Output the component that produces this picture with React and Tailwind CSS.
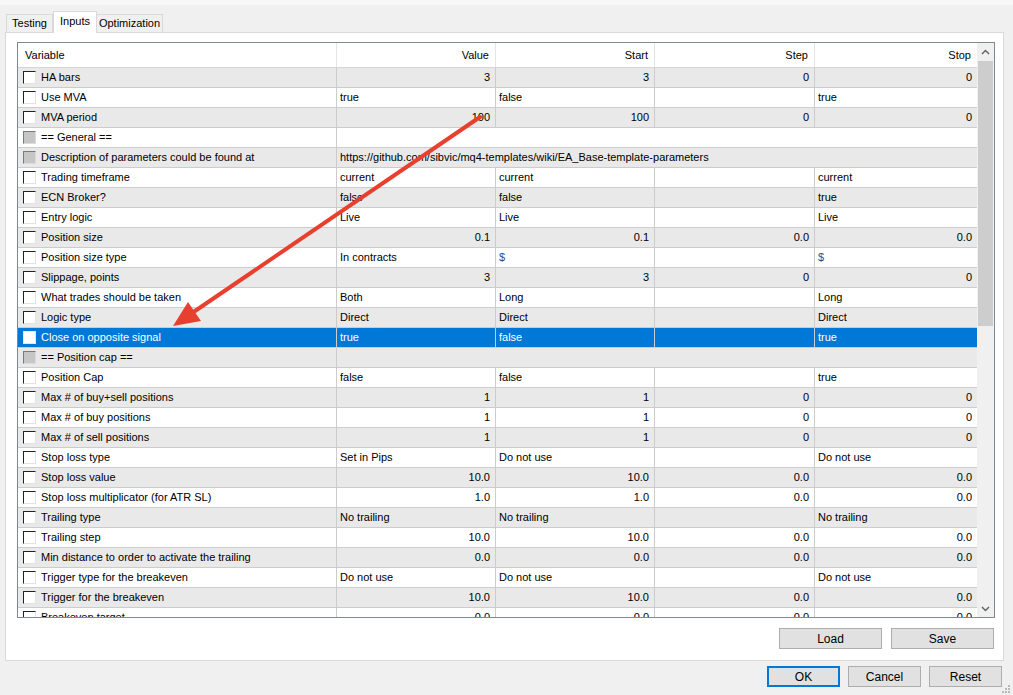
import React from 'react';
import clsx from 'clsx';

// Parameters of the tester "Inputs" tab. kind: num = right aligned, txt = left aligned
const rows = [
    { name: 'HA bars', v: ['3', '3', '0', '0'], kind: 'num' },
    { name: 'Use MVA', v: ['true', 'false', '', 'true'], kind: 'txt' },
    { name: 'MVA period', v: ['100', '100', '0', '0'], kind: 'num' },
    { name: '== General ==', group: true },
    { name: 'Description of parameters could be found at', url: 'https://github.com/sibvic/mq4-templates/wiki/EA_Base-template-parameters', group: true },
    { name: 'Trading timeframe', v: ['current', 'current', '', 'current'], kind: 'txt' },
    { name: 'ECN Broker?', v: ['false', 'false', '', 'true'], kind: 'txt' },
    { name: 'Entry logic', v: ['Live', 'Live', '', 'Live'], kind: 'txt' },
    { name: 'Position size', v: ['0.1', '0.1', '0.0', '0.0'], kind: 'num' },
    { name: 'Position size type', v: ['In contracts', '$', '', '$'], kind: 'txt' },
    { name: 'Slippage, points', v: ['3', '3', '0', '0'], kind: 'num' },
    { name: 'What trades should be taken', v: ['Both', 'Long', '', 'Long'], kind: 'txt' },
    { name: 'Logic type', v: ['Direct', 'Direct', '', 'Direct'], kind: 'txt' },
    { name: 'Close on opposite signal', v: ['true', 'false', '', 'true'], kind: 'txt', selected: true },
    { name: '== Position cap ==', group: true },
    { name: 'Position Cap', v: ['false', 'false', '', 'true'], kind: 'txt' },
    { name: 'Max # of buy+sell positions', v: ['1', '1', '0', '0'], kind: 'num' },
    { name: 'Max # of buy positions', v: ['1', '1', '0', '0'], kind: 'num' },
    { name: 'Max # of sell positions', v: ['1', '1', '0', '0'], kind: 'num' },
    { name: 'Stop loss type', v: ['Set in Pips', 'Do not use', '', 'Do not use'], kind: 'txt' },
    { name: 'Stop loss value', v: ['10.0', '10.0', '0.0', '0.0'], kind: 'num' },
    { name: 'Stop loss multiplicator (for ATR SL)', v: ['1.0', '1.0', '0.0', '0.0'], kind: 'num' },
    { name: 'Trailing type', v: ['No trailing', 'No trailing', '', 'No trailing'], kind: 'txt' },
    { name: 'Trailing step', v: ['10.0', '10.0', '0.0', '0.0'], kind: 'num' },
    { name: 'Min distance to order to activate the trailing', v: ['0.0', '0.0', '0.0', '0.0'], kind: 'num' },
    { name: 'Trigger type for the breakeven', v: ['Do not use', 'Do not use', '', 'Do not use'], kind: 'txt' },
    { name: 'Trigger for the breakeven', v: ['10.0', '10.0', '0.0', '0.0'], kind: 'num' },
    { name: 'Breakeven target', v: ['0.0', '0.0', '0.0', '0.0'], kind: 'num' },
];

const Checkbox = ({ disabled, selected }) => (
    <span
        className={clsx(
            'w-[13px] h-[13px] shrink-0 border',
            disabled
                ? 'bg-[#c6c6c6] border-[#7a7a7a] border-r-[#dcdcdc] border-b-[#dcdcdc]'
                : selected
                    ? 'bg-white border-[#e8e8e8]'
                    : 'bg-white border-[#222222] border-r-[#e3e3e3] border-b-[#e3e3e3]'
        )}
    />
);

const cellBase = 'h-[20px] flex items-center border-r border-b border-[#cccccc] overflow-hidden whitespace-nowrap';

const Row = ({ row, index }) => {
    const bg = row.selected ? 'bg-[#0078d7] text-white' : index % 2 === 0 ? 'bg-[#e9e9e9]' : 'bg-white';

    if (row.group) {
        return (
            <div className={clsx('grid grid-cols-[319px_640px]', bg)}>
                <div className={clsx(cellBase, 'pl-[5px] gap-[5px]')}>
                    <Checkbox disabled />
                    <span>{row.name}</span>
                </div>
                <div className={clsx(cellBase, 'pl-[3px] border-r-0')}>{row.url}</div>
            </div>
        );
    }

    return (
        <div className={clsx('grid grid-cols-[319px_159px_159px_160px_162px]', bg)}>
            <div className={clsx(cellBase, 'pl-[5px] gap-[5px]')}>
                <Checkbox selected={row.selected} />
                <span>{row.name}</span>
            </div>
            {row.v.map((val, i) => (
                <div
                    key={i}
                    className={clsx(
                        cellBase,
                        row.kind === 'num' ? 'justify-end pr-[5px]' : 'pl-[3px]',
                        i === 3 && 'border-r-0',
                        val === '$' && !row.selected && 'text-[#1d4f8c]'
                    )}
                >
                    {val}
                </div>
            ))}
        </div>
    );
};

const Chevron = ({ up }) => (
    <svg width="9" height="6" viewBox="0 0 9 6" className="text-[#606060]">
        <path d={up ? 'M1 5 L4.5 1.5 L8 5' : 'M1 1 L4.5 4.5 L8 1'} fill="none" stroke="currentColor" strokeWidth="1.4" />
    </svg>
);

const Button = ({ children, width, primary }) => (
    <button
        className={clsx(
            'h-[21px] bg-[#e1e1e1] text-[12px] text-black flex items-center justify-center',
            width,
            primary ? 'border-2 border-[#0078d7]' : 'border border-[#adadad]'
        )}
    >
        {children}
    </button>
);

export default function App() {
    return (
        <div
            className="relative w-[1013px] h-[695px] bg-[#f0f0f0] overflow-hidden text-[11px] text-black"
            style={{ fontFamily: '"Liberation Sans", Arial, sans-serif' }}
        >
            <div className="h-[5px] bg-[#f8f8f8]" />

            <div className="px-[5px] pt-[6px]">
                {/* Tabs */}
                <div className="flex items-end h-[21px] pl-[1px]">
                    <div className="w-[47px] h-[18px] flex items-center justify-center border border-b-0 border-[#d9d9d9] bg-[#f0f0f0]">Testing</div>
                    <div className="relative z-10 w-[44px] h-[22px] -mb-[1px] pb-[3px] flex items-center justify-center border border-b-0 border-[#d9d9d9] bg-white">Inputs</div>
                    <div className="w-[66px] h-[18px] flex items-center justify-center border border-b-0 border-l-0 border-[#d9d9d9] bg-[#f0f0f0]">Optimization</div>
                </div>

                {/* Tab panel */}
                <div className="w-[999px] h-[629px] border border-[#d9d9d9] bg-white pl-[11px] pt-[9px]">
                    <div className="w-[978px] h-[576px] border border-[#828790] flex bg-white">
                        <div className="w-[959px] h-[574px] flex flex-col overflow-hidden">
                            {/* Header */}
                            <div className="grid grid-cols-[319px_159px_159px_160px_162px] h-[25px] shrink-0 border-b border-[#d5d5d5] bg-white">
                                <div className="flex items-center pl-[7px] pt-[1px] border-r border-[#e5e5e5]">Variable</div>
                                <div className="flex items-center justify-end pr-[6px] pt-[1px] border-r border-[#e5e5e5]">Value</div>
                                <div className="flex items-center justify-end pr-[6px] pt-[1px] border-r border-[#e5e5e5]">Start</div>
                                <div className="flex items-center justify-end pr-[6px] pt-[1px] border-r border-[#e5e5e5]">Step</div>
                                <div className="flex items-center justify-end pr-[6px] pt-[1px]">Stop</div>
                            </div>
                            {rows.map((row, i) => (
                                <Row key={i} row={row} index={i} />
                            ))}
                        </div>

                        {/* Vertical scrollbar */}
                        <div className="w-[17px] h-[574px] bg-[#f0f0f0] flex flex-col">
                            <div className="h-[17px] flex items-center justify-center"><Chevron up /></div>
                            <div className="flex-1 px-[1px] pt-[1px]">
                                <div className="h-[265px] bg-[#cdcdcd]" />
                            </div>
                            <div className="h-[17px] flex items-center justify-center"><Chevron /></div>
                        </div>
                    </div>

                    <div className="flex justify-end gap-[9px] pr-[9px] mt-[10px]">
                        <Button width="w-[103px]">Load</Button>
                        <Button width="w-[103px]">Save</Button>
                    </div>
                </div>

                {/* Dialog buttons */}
                <div className="flex justify-end gap-[8px] pr-[6px] mt-[5px]">
                    <Button width="w-[73px]" primary>OK</Button>
                    <Button width="w-[73px]">Cancel</Button>
                    <Button width="w-[73px]">Reset</Button>
                </div>
            </div>

            {/* Size grip */}
            <svg className="absolute right-[3px] bottom-[2px]" width="9" height="9" viewBox="0 0 9 9">
                {[[7, 1], [7, 4], [4, 4], [7, 7], [4, 7], [1, 7]].map(([x, y], i) => (
                    <rect key={i} x={x} y={y} width="2" height="2" fill="#b8b8b8" />
                ))}
            </svg>

            {/* Annotation arrow */}
            <svg className="absolute left-0 top-0 pointer-events-none" width="1013" height="695">
                <line x1="480" y1="117" x2="195" y2="311" stroke="#e8402f" strokeWidth="4" strokeLinecap="round" />
                <polygon points="173,326 188,302 201,321" fill="#e8402f" />
            </svg>
        </div>
    );
}
